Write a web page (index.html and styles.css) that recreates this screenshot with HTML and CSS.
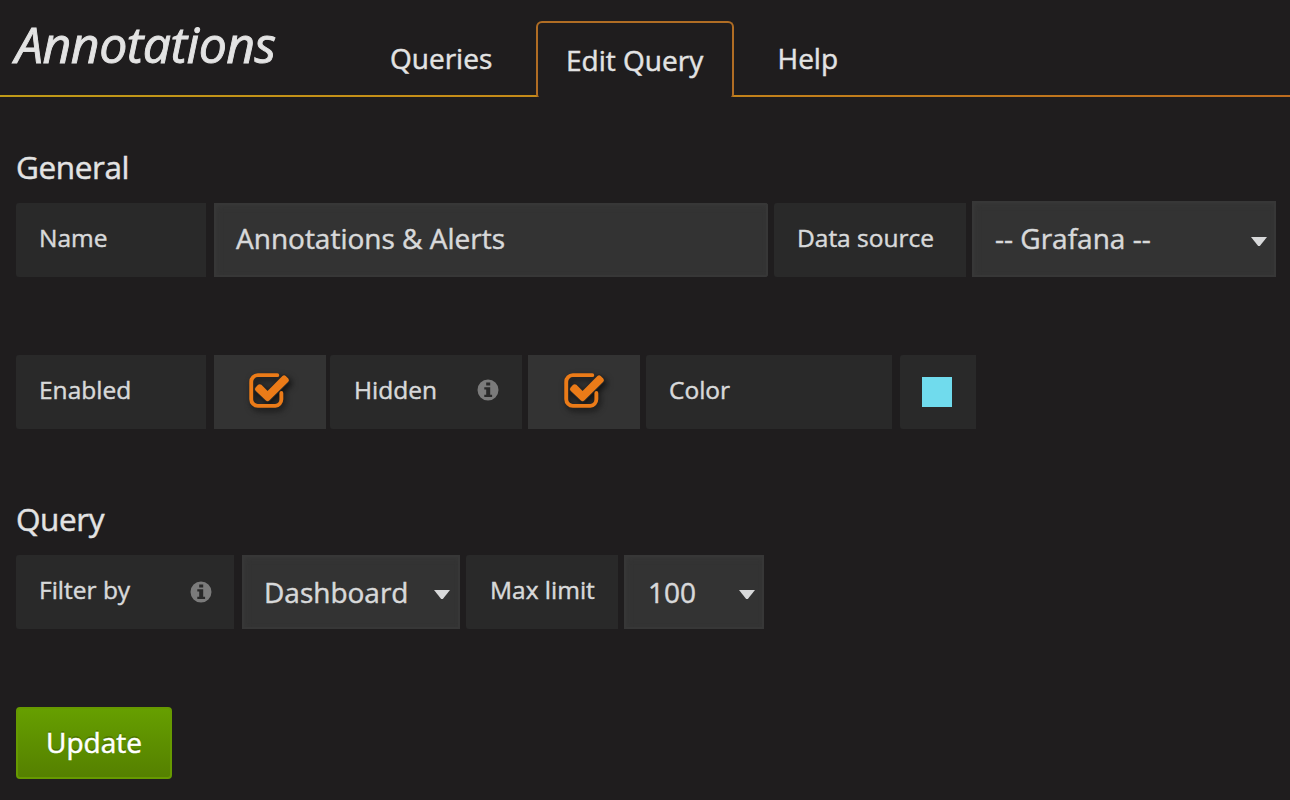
FILE: index.html
```html
<!DOCTYPE html>
<html lang="en">
<head>
<meta charset="utf-8">
<title>Annotations</title>
<link rel="stylesheet" href="styles.css">
</head>
<body>
<svg class="defs" width="0" height="0">
  <symbol id="check" viewBox="0 0 42 36">
    <path class="check-box" d="M29 2.2H9A6.8 6.8 0 0 0 2.2 9v18A6.8 6.8 0 0 0 9 33.800h18A6.800 6.800 0 0 0 33.200 27v-6.500"/>
    <path class="check-mark" d="M6.700 14.800l2.600-2.600q1.700-1.500 3.400 0l6.300 6.300L34.300 3q1.700-1.500 3.400 0l2.600 2.600q1.500 1.700 0 3.400L20.700 28.400q-1.700 1.500-3.400 0L6.700 18.200q-1.500-1.700 0-3.400z"/>
  </symbol>
  <symbol id="info" viewBox="0 0 22 22">
    <path class="info-shape" fill-rule="evenodd" d="M11 .5a10.500 10.500 0 1 1 0 21a10.500 10.500 0 1 1 0-21zM9.200 3.500v3h4v-3zM7.300 8.300v2.200h1.900v5.300H7.300V18h7.800v-2.200h-1.900V8.300z"/>
  </symbol>
</svg>
<header class="tabs-header">
  <h1 class="page-title">Annotations</h1>
  <nav class="tabs">
    <a class="tab tab-queries">Queries</a>
    <a class="tab tab-active">Edit Query</a>
    <a class="tab tab-help">Help</a>
  </nav>
</header>
<main class="content">
  <h2 class="heading">General</h2>
  <div class="row row-general">
    <label class="label label-name">Name</label>
    <div class="field field-name">Annotations &amp; Alerts</div>
    <label class="label label-source">Data source</label>
    <div class="field select select-source"><span>-- Grafana --</span><i class="caret"></i></div>
  </div>
  <div class="row row-switches">
    <label class="label label-name">Enabled</label>
    <div class="switch"><svg class="check"><use href="#check"/></svg></div>
    <label class="label label-hidden"><span>Hidden</span><svg class="info"><use href="#info"/></svg></label>
    <div class="switch"><svg class="check"><use href="#check"/></svg></div>
    <label class="label label-color">Color</label>
    <div class="color-cell"><div class="swatch"></div></div>
  </div>
  <h2 class="heading heading-query">Query</h2>
  <div class="row row-query">
    <label class="label label-filter"><span>Filter by</span><svg class="info info-filter"><use href="#info"/></svg></label>
    <div class="field select select-filter"><span>Dashboard</span><i class="caret"></i></div>
    <label class="label label-limit">Max limit</label>
    <div class="field select select-limit"><span>100</span><i class="caret"></i></div>
  </div>
  <button class="update">Update</button>
</main>
</body>
</html>
```
FILE: styles.css
```css
* { box-sizing: border-box; }
body {
  margin: 0;
  height: 800px;
  overflow: hidden;
  background: #1f1d1e;
  color: #d8d9da;
  font: 28px "Open Sans", sans-serif;
  white-space: nowrap;
  -webkit-text-stroke: .45px currentColor;
}
.defs { position: absolute; }
.tabs-header {
  display: flex;
  height: 97px;
  background: linear-gradient(to right, #bf9a18, #c58e18 33%, #bd6c1f) bottom / 100% 2px no-repeat;
}
.page-title {
  margin: 0;
  width: 360px;
  padding-left: 15px;
  font-size: 50px;
  font-weight: 400;
  font-style: italic;
  line-height: 89px;
  letter-spacing: -.5px;
  color: #e3e3e3;
  -webkit-text-stroke-width: .9px;
}
.tabs { display: flex; }
.tab { color: #e3e3e3; line-height: 117px; }
.tab-queries { width: 176px; padding-left: 30px; }
.tab-active {
  width: 198px;
  height: 76px;
  margin-top: 21px;
  padding-left: 28px;
  line-height: 74px;
  border: 2px solid #b06d24;
  border-bottom: 0;
  border-radius: 6px 6px 3px 3px;
  background: #1f1d1e;
}
.tab-help { padding-left: 43.500px; }
.content { padding: 46px 14px 0 16px; }
.heading {
  margin: 0;
  height: 58px;
  font-size: 31.500px;
  font-weight: 400;
  line-height: 48px;
  letter-spacing: -.4px;
  color: #e3e3e3;
}
.heading-query { height: 60px; }
.row { display: flex; align-items: flex-end; height: 76px; }
.row > * { flex: none; }
.row-switches { margin: 76px 0 66px; }
.row-query { height: 74px; margin-bottom: 78px; }
.label {
  display: flex;
  height: 74px;
  padding-left: 23px;
  line-height: 69px;
  font-size: 24.500px;
  background: #292929;
  border-radius: 3px 0 0 3px;
}
.label-name { width: 190px; margin-right: 8px; }
.label-source { width: 192px; margin-right: 6px; }
.label-hidden { width: 192px; margin-right: 6px; padding: 0 23px 0 24px; justify-content: space-between; }
.label-color { width: 246px; margin-right: 8px; }
.label-filter { width: 218px; margin-right: 8px; padding-right: 22px; justify-content: space-between; }
.label-limit { width: 152px; margin-right: 6px; padding-left: 24px; }
.field {
  height: 74px;
  padding-left: 22px;
  line-height: 70px;
  background: #333;
  box-shadow: inset 0 0 0 2px #373737, inset 2px 2px 6px #393939;
}
.field-name { width: 554px; margin-right: 6px; border-radius: 0 3px 3px 0; }
.select { display: flex; align-items: center; justify-content: space-between; line-height: 74px; }
.select-source { width: 304px; height: 76px; padding: 0 9px 0 23px; line-height: 72px; }
.select-source span { margin-top: -2px; }
.select-filter { width: 218px; margin-right: 6px; padding-right: 10px; }
.select-limit { width: 140px; padding: 0 9px 0 24px; }
.caret {
  width: 16px;
  height: 9px;
  margin-top: 5px;
  background: #d8d9da;
  clip-path: polygon(0 0, 100% 0, 55% 100%, 45% 100%);
}
.switch { width: 112px; height: 74px; margin-right: 4px; padding: 18px 0 0 35px; background: #333; }
.label-hidden + .switch { margin-right: 6px; padding-left: 36px; }
.check { display: block; width: 41px; height: 35px; overflow: visible; filter: drop-shadow(2px 3px 3px #111); }
.check-box { fill: none; stroke: #eb7b18; stroke-width: 4; stroke-linecap: round; }
.check-mark { fill: #eb7b18; stroke: #272727; stroke-width: 2; paint-order: stroke; }
.info { width: 22px; height: 22px; margin-top: 24px; }
.info-filter { margin-top: 26px; }
.info-shape { fill: #7b7b7b; stroke: none; }
.color-cell { width: 76px; height: 74px; padding: 22px; background: #292929; border-radius: 3px 0 0 3px; }
.swatch { width: 30px; height: 30px; background: #70dbed; }
.update {
  display: block;
  width: 156px;
  height: 72px;
  padding: 0 0 2px;
  border: 2px solid #669900;
  border-radius: 4px;
  background: linear-gradient(#669f00, #558000);
  color: #fff;
  font: 28px "Open Sans", sans-serif;
  -webkit-text-stroke: .5px #fff;
  text-shadow: 0 -2px 0 rgba(0, 0, 0, .2);
}
```
